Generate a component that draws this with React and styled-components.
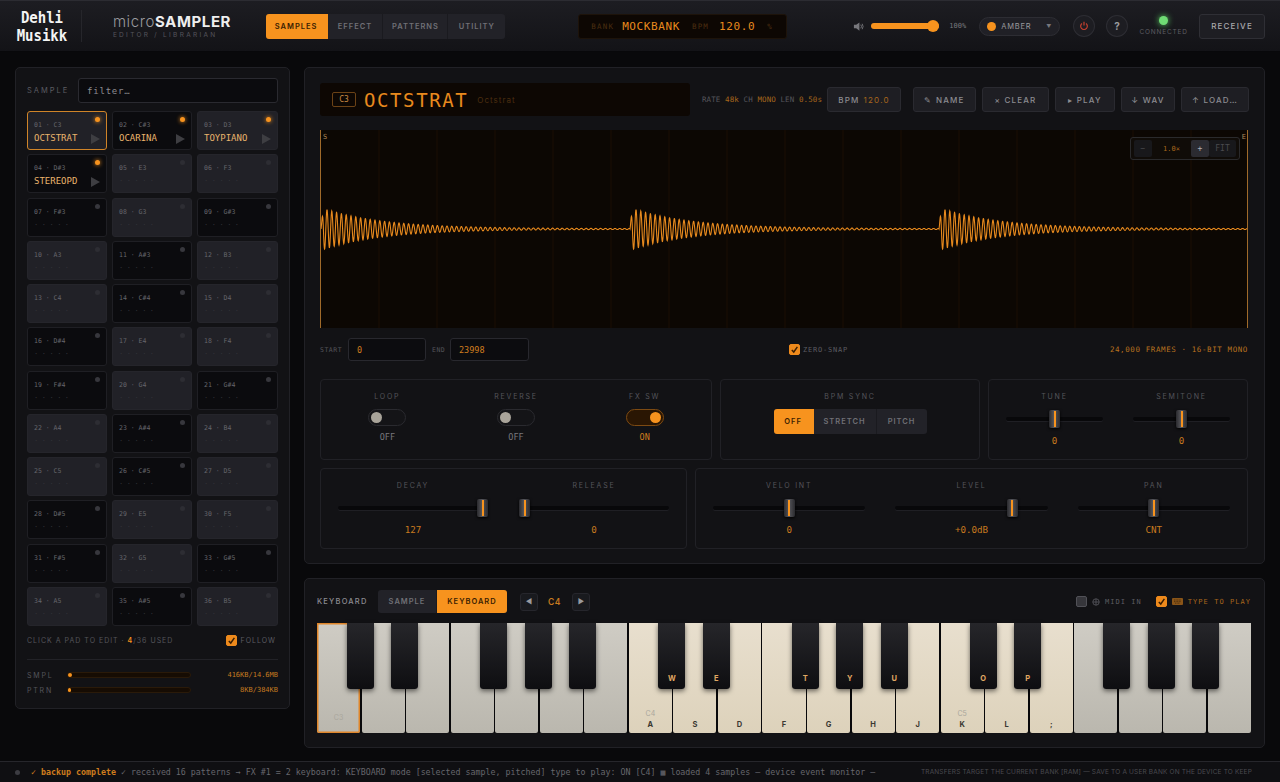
import React from "react";
import styled, { createGlobalStyle } from "styled-components";

const MONO = `"DejaVu Sans Mono", "Liberation Mono", monospace`;
const LABEL = `Inter, "Liberation Sans", sans-serif`;
const AMBER = "#f7931e";

const GlobalStyle = createGlobalStyle`
  html, body { margin: 0; padding: 0; background: #09090b; }
  body { width: 1280px; height: 782px; overflow: hidden; font-family: ${LABEL}; }
  * { box-sizing: border-box; }
`;

const Page = styled.div`
  width: 1280px;
  height: 782px;
  display: flex;
  flex-direction: column;
`;

/* ---- Top bar ---- */
const TopBar = styled.header`
  height: 52px;
  flex: none;
  display: flex;
  align-items: center;
  padding: 0 15px;
  background: linear-gradient(#1d1d22, #131317);
  border-top: 1px solid #2c2c32;
  border-bottom: 1px solid #08080a;
`;

const Logo = styled.div`
  width: 54px;
  color: #f4f4f4;
  font-family: ${MONO};
  font-weight: 700;
  font-size: 14px;
  line-height: 16px;
  letter-spacing: 0;
  text-align: center;
  transform: scaleY(1.12);
`;

const BarDivider = styled.div`
  width: 1px;
  height: 32px;
  margin: 0 31px 0 12px;
  background: #26262b;
`;

const Brand = styled.div`
  width: 153px;
`;

const BrandName = styled.div`
  font-size: 15px;
  line-height: 17px;
  letter-spacing: 0.6px;
  color: #9a9a9e;
  font-weight: 300;
  & b { color: #eeeeee; font-weight: 700; }
`;

const BrandSub = styled.div`
  font-size: 6.5px;
  line-height: 9px;
  letter-spacing: 2.3px;
  margin-top: 1px;
  color: #55555b;
`;

const Segmented = styled.div`
  display: flex;
  height: ${({ $h }) => $h}px;
  background: #222228;
  border-radius: 3px;
  overflow: hidden;
`;

const SegButton = styled.div`
  width: ${({ $w }) => $w}px;
  display: flex;
  align-items: center;
  justify-content: center;
  font-size: 7.5px;
  font-weight: 600;
  letter-spacing: 1px;
  color: ${({ $on }) => ($on ? "#3a1e02" : "#707076")};
  background: ${({ $on }) => ($on ? AMBER : "transparent")};
  border-right: 1px solid ${({ $on }) => ($on ? AMBER : "#1a1a1f")};
  &:last-child { border-right: none; }
`;

const BankDisplay = styled.div`
  width: 209px;
  height: 25px;
  margin-left: 73px;
  padding: 0 12px;
  display: flex;
  align-items: center;
  background: #0d0703;
  border: 1px solid #1d130a;
  border-radius: 3px;
  font-family: ${MONO};
`;

const LcdTag = styled.span`
  font-size: 7.5px;
  letter-spacing: 1.2px;
  color: #4b2e10;
  margin-right: ${({ $mr }) => $mr || 8}px;
`;

const LcdValue = styled.span`
  font-size: 11px;
  letter-spacing: 0.6px;
  color: #e88a1e;
  margin-right: 12px;
`;

const Volume = styled.div`
  margin-left: 66px;
  display: flex;
  align-items: center;
  color: #77777c;
`;

const VolumeTrack = styled.div`
  position: relative;
  width: 68px;
  height: 6px;
  margin-left: 7px;
  border-radius: 3px;
  background: ${AMBER};
  &::after {
    content: "";
    position: absolute;
    right: 0;
    top: -3px;
    width: 12px;
    height: 12px;
    border-radius: 50%;
    background: ${AMBER};
  }
`;

const VolumeText = styled.span`
  width: 40px;
  padding-left: 10px;
  font-family: ${MONO};
  font-size: 7px;
  color: #77777c;
`;

const ThemePicker = styled.div`
  width: 81px;
  height: 19px;
  padding: 0 7px;
  display: flex;
  align-items: center;
  border-radius: 10px;
  background: #202026;
  border: 1px solid #2d2d33;
  font-size: 7.5px;
  letter-spacing: 0.8px;
  color: #9a9a9e;
  & i {
    width: 9px;
    height: 9px;
    margin-right: 5px;
    border-radius: 50%;
    background: ${AMBER};
  }
  & em {
    margin-left: auto;
    font-style: normal;
    font-size: 5px;
    color: #77777c;
  }
`;

const RoundButton = styled.div`
  width: 22px;
  height: 22px;
  margin-left: ${({ $ml }) => $ml}px;
  display: flex;
  align-items: center;
  justify-content: center;
  border-radius: 50%;
  background: #1d1d22;
  border: 1px solid #2d2d33;
  color: ${({ $red }) => ($red ? "#c8402f" : "#9a9a9e")};
  font-size: 10px;
  font-weight: 700;
`;

const Connection = styled.div`
  width: 47px;
  margin-left: 12px;
  display: flex;
  flex-direction: column;
  align-items: center;
  font-size: 6.5px;
  letter-spacing: 0.8px;
  color: #5c5c62;
  & i {
    width: 9px;
    height: 9px;
    margin-bottom: 3px;
    border-radius: 50%;
    background: #6fdc74;
    box-shadow: 0 0 6px #5ed468;
  }
`;

const ReceiveButton = styled.div`
  width: 66px;
  height: 25px;
  margin-left: 12px;
  display: flex;
  align-items: center;
  justify-content: center;
  font-size: 8px;
  font-weight: 500;
  letter-spacing: 1.2px;
  color: #a8a8ac;
  background: #1e1e23;
  border: 1px solid #2f2f35;
  border-radius: 3px;
`;

/* ---- Main layout ---- */
const Main = styled.main`
  flex: 1;
  min-height: 0;
  display: grid;
  grid-template-columns: 275px 961px;
  gap: 14px;
  padding: 15px 15px 13px;
`;

const Panel = styled.section`
  background: #121215;
  border: 1px solid #212126;
  border-radius: 5px;
`;

const SideBar = styled(Panel)`
  height: 642px;
  padding: 10px 11px 0 11px;
`;

const RightColumn = styled.div`
  display: flex;
  flex-direction: column;
  gap: 14px;
`;

/* ---- Sample list ---- */
const FilterRow = styled.div`
  display: flex;
  align-items: center;
  height: 25px;
`;

const SmallLabel = styled.span`
  font-size: 7.5px;
  letter-spacing: 2px;
  color: #5c5c62;
`;

const FilterInput = styled.div`
  width: 200px;
  height: 25px;
  margin-left: auto;
  padding: 0 8px;
  display: flex;
  align-items: center;
  background: #0b0b0e;
  border: 1px solid #2a2a30;
  border-radius: 3px;
  font-family: ${MONO};
  font-size: 9px;
  letter-spacing: 0.8px;
  color: #8d8d92;
`;

const PadGrid = styled.div`
  margin-top: 8px;
  display: grid;
  grid-template-columns: 80px 80px 81px;
  grid-auto-rows: 39px;
  column-gap: 5px;
  row-gap: 4.27px;
`;

const PadCell = styled.div`
  position: relative;
  padding: 9px 6px 0 6px;
  border-radius: 3px;
  background: ${({ $dark }) => ($dark ? "#0b0b0e" : "#212127")};
  border: 1px solid ${({ $selected, $dark }) => ($selected ? "#d08428" : $dark ? "#1f1f24" : "#25252b")};
`;

const PadNum = styled.div`
  font-family: ${MONO};
  font-size: 6.5px;
  line-height: 9px;
  color: #65656b;
`;

const PadName = styled.div`
  margin-top: 3px;
  font-family: ${MONO};
  font-size: 9px;
  line-height: 11px;
  color: #e9b36c;
`;

const PadTicks = styled.div`
  margin-top: 4px;
  font-family: ${MONO};
  font-size: 7px;
  line-height: 9px;
  letter-spacing: 3.5px;
  color: #34343a;
`;

const PadDot = styled.i`
  position: absolute;
  top: 5px;
  right: 6px;
  width: 5px;
  height: 5px;
  border-radius: 50%;
  background: ${({ $on, $dark }) => ($on ? AMBER : $dark ? "#37373d" : "#2d2d33")};
  box-shadow: ${({ $on }) => ($on ? `0 0 4px ${AMBER}` : "none")};
`;

const PadPlay = styled.i`
  position: absolute;
  right: 6px;
  bottom: 5px;
  width: 0;
  height: 0;
  border-left: 9px solid #3e3e42;
  border-top: 5px solid transparent;
  border-bottom: 5px solid transparent;
`;

const SideInfo = styled.div`
  margin: 7px 0 8px;
  height: 27px;
  padding: 0 2px 10px 0;
  display: flex;
  align-items: center;
  justify-content: space-between;
  font-size: 7px;
  letter-spacing: 1px;
  color: #55555b;
  border-bottom: 1px solid #222227;
  & b { color: ${AMBER}; font-weight: 600; }
`;

const CheckRow = styled.label`
  display: flex;
  align-items: center;
  gap: ${({ $gap }) => $gap || 4}px;
  font-size: 7px;
  letter-spacing: 1px;
  color: ${({ $amber }) => ($amber ? "#a8661c" : "#5c5c62")};
`;

const CheckBox = styled.span`
  width: 11px;
  height: 11px;
  display: flex;
  align-items: center;
  justify-content: center;
  border-radius: 2px;
  background: ${({ $on }) => ($on ? "#ee8a1c" : "#36363b")};
  border: 1px solid ${({ $on }) => ($on ? "#ee8a1c" : "#515157")};
`;

const MeterRow = styled.div`
  height: 15px;
  display: flex;
  align-items: center;
`;

const MeterLabel = styled.span`
  width: 40px;
  font-size: 7px;
  letter-spacing: 1.8px;
  color: #55555b;
`;

const MeterTrack = styled.div`
  width: 124px;
  height: 6px;
  background: #160c03;
  border: 1px solid #2a1a09;
  border-radius: 3px;
`;

const MeterFill = styled.div`
  height: 100%;
  background: ${AMBER};
  border-radius: 2px;
`;

const MeterValue = styled.span`
  margin-left: auto;
  font-family: ${MONO};
  font-size: 7px;
  color: #c47a20;
`;

/* ---- Sample editor ---- */
const Editor = styled(Panel)`
  height: 497px;
  padding: 15px 16px 0 15px;
`;

const EditorHead = styled.div`
  height: 33px;
  display: flex;
  align-items: center;
  & > * { flex: none; }
`;

const NameDisplay = styled.div`
  width: 370px;
  height: 33px;
  padding: 0 12px;
  display: flex;
  align-items: center;
  background: #0d0703;
  border-radius: 3px;
`;

const NoteBadge = styled.span`
  width: 24px;
  height: 15px;
  display: flex;
  align-items: center;
  justify-content: center;
  border: 1px solid #6b4216;
  border-radius: 2px;
  font-family: ${MONO};
  font-size: 8px;
  color: #c88a44;
`;

const SampleTitle = styled.span`
  margin-left: 8px;
  font-family: ${MONO};
  font-size: 19px;
  letter-spacing: 1.6px;
  color: #e88a1e;
`;

const SampleSub = styled.span`
  margin-left: 9px;
  font-size: 8px;
  letter-spacing: 1px;
  color: #4b2e10;
`;

const Meta = styled.div`
  margin-left: 12px;
  width: 125px;
  font-family: ${MONO};
  font-size: 7.5px;
  letter-spacing: 0.1px;
  color: #55555b;
  white-space: nowrap;
  & b { color: #a8661c; font-weight: 400; }
`;

const ActionButton = styled.div`
  width: ${({ $w }) => $w}px;
  height: 25px;
  margin-left: ${({ $ml }) => $ml ?? 6}px;
  display: flex;
  align-items: center;
  justify-content: center;
  gap: 4px;
  font-size: 8px;
  font-weight: 500;
  letter-spacing: 1.2px;
  color: #8c8c91;
  background: #1e1e23;
  border: 1px solid #2a2a30;
  border-radius: 3px;
  & b { color: #a8661c; font-weight: 400; }
`;

const WaveBox = styled.div`
  position: relative;
  margin-top: 14px;
  height: 198px;
  background: #0c0703;
  border-left: 1px solid #a06a2a;
  border-right: 1px solid #a06a2a;
`;

const WaveSvg = styled.svg`
  display: block;
  width: 100%;
  height: 100%;
`;

const WaveMark = styled.span`
  position: absolute;
  top: 3px;
  ${({ $end }) => ($end ? "right: 1px;" : "left: 2px;")}
  font-family: ${MONO};
  font-size: 7px;
  color: #b08a5a;
`;

const ZoomBox = styled.div`
  position: absolute;
  top: 7px;
  right: 7px;
  width: 110px;
  height: 23px;
  padding: 0 3px;
  display: flex;
  align-items: center;
  background: #100c08;
  border: 1px solid #2a2a2c;
  border-radius: 3px;
  font-family: ${MONO};
`;

const ZoomButton = styled.span`
  width: ${({ $w }) => $w || 18}px;
  height: 17px;
  display: flex;
  align-items: center;
  justify-content: center;
  border-radius: 2px;
  background: ${({ $lit }) => ($lit ? "#2b2b31" : "#18181b")};
  color: ${({ $lit }) => ($lit ? "#b0b0b4" : "#4a4a4e")};
  font-size: 8px;
`;

const ZoomValue = styled.span`
  flex: 1;
  text-align: center;
  font-size: 7px;
  color: #a8661c;
`;

const RangeRow = styled.div`
  margin-top: 10px;
  height: 23px;
  display: flex;
  align-items: center;
`;

const RangeLabel = styled.span`
  width: ${({ $w }) => $w}px;
  font-family: ${MONO};
  font-size: 6.5px;
  letter-spacing: 0.5px;
  color: #55555b;
`;

const RangeInput = styled.div`
  width: ${({ $w }) => $w}px;
  height: 23px;
  margin-right: 6px;
  padding: 0 8px;
  display: flex;
  align-items: center;
  background: #0c0c0f;
  border: 1px solid #28282e;
  border-radius: 3px;
  font-family: ${MONO};
  font-size: 8.5px;
  color: #d07d1e;
`;

const ZeroSnap = styled(CheckRow)`
  margin-left: 254px;
  font-family: ${MONO};
  font-size: 7px;
  letter-spacing: 0.8px;
`;

const FramesText = styled.span`
  margin-left: auto;
  font-family: ${MONO};
  font-size: 7.5px;
  letter-spacing: 0.6px;
  color: #b9711f;
`;

const GroupRow = styled.div`
  margin-top: ${({ $mt }) => $mt}px;
  display: grid;
  grid-template-columns: ${({ $cols }) => $cols};
  gap: 8px;
`;

const Group = styled.div`
  height: 81px;
  padding: ${({ $px }) => `12px ${$px}px 0`};
  display: grid;
  grid-template-columns: repeat(${({ $n }) => $n}, 1fr);
  column-gap: ${({ $gap }) => $gap}px;
  border: 1px solid #212126;
  border-radius: 4px;
`;

const Cell = styled.div`
  display: flex;
  flex-direction: column;
  align-items: center;
`;

const CellLabel = styled.div`
  height: 9px;
  font-size: 7px;
  line-height: 9px;
  letter-spacing: 1.8px;
  color: #55555b;
`;

const Switch = styled.div`
  position: relative;
  width: 38px;
  height: 17px;
  margin-top: 8px;
  border-radius: 9px;
  background: ${({ $on }) => ($on ? "#2a1603" : "#141417")};
  border: 1px solid ${({ $on }) => ($on ? "#7d4a12" : "#2a2a2f")};
  &::after {
    content: "";
    position: absolute;
    top: 2px;
    ${({ $on }) => ($on ? "right: 2px;" : "left: 2px;")}
    width: 11px;
    height: 11px;
    border-radius: 50%;
    background: ${({ $on }) => ($on ? AMBER : "#a9a49a")};
  }
`;

const SwitchText = styled.div`
  margin-top: 6px;
  font-family: ${MONO};
  font-size: 8.5px;
  line-height: 11px;
  color: ${({ $on }) => ($on ? "#d07d1e" : "#77777c")};
`;

const SliderBox = styled.div`
  position: relative;
  width: 100%;
  height: 18px;
  margin-top: 9px;
  display: flex;
  align-items: center;
`;

const SliderTrack = styled.div`
  width: 100%;
  height: 4px;
  background: #08080a;
  border-radius: 2px;
  box-shadow: 0 1px 0 #1f1f24;
`;

const SliderThumb = styled.div`
  position: absolute;
  top: 0;
  width: 11px;
  height: 18px;
  border-radius: 2px;
  background: linear-gradient(90deg, #2a2a2e, #55555a 45%, #2a2a2e);
  box-shadow: 0 1px 3px #000;
  &::after {
    content: "";
    position: absolute;
    left: 4.5px;
    top: 1px;
    bottom: 1px;
    width: 2px;
    background: ${AMBER};
  }
`;

const SliderValue = styled.div`
  margin-top: 7px;
  font-family: ${MONO};
  font-size: 9.2px;
  line-height: 12px;
  color: #c87a1f;
`;

const SyncBody = styled.div`
  margin-top: 8px;
`;

/* ---- Keyboard ---- */
const KeyboardPanel = styled(Panel)`
  height: 170px;
  padding: 11px 13px 0 12px;
`;

const KeyboardHead = styled.div`
  height: 23px;
  display: flex;
  align-items: center;
`;

const KeyboardTitle = styled.span`
  width: 61px;
  font-size: 7.5px;
  font-weight: 500;
  letter-spacing: 1.2px;
  color: #8c8c91;
`;

const ArrowButton = styled.div`
  width: 18px;
  height: 18px;
  margin-left: ${({ $ml }) => $ml}px;
  display: flex;
  align-items: center;
  justify-content: center;
  font-size: 7px;
  color: #9a9a9e;
  background: #191a1e;
  border: 1px solid #26262c;
  border-radius: 3px;
`;

const OctaveText = styled.span`
  margin-left: 10px;
  font-size: 8.5px;
  font-weight: 600;
  letter-spacing: 0.5px;
  color: #c87a1f;
`;

const HeadRight = styled.div`
  margin-left: auto;
  display: flex;
  align-items: center;
  gap: 14px;
  font-family: ${MONO};
  & > label { font-family: ${MONO}; letter-spacing: 1.05px; }
`;

const Keys = styled.div`
  position: relative;
  margin-top: 10px;
  height: 110px;
  display: flex;
  background: #08080a;
`;

const WhiteKey = styled.div`
  position: relative;
  flex: 1;
  margin-right: 1.5px;
  display: flex;
  flex-direction: column;
  align-items: center;
  justify-content: flex-end;
  padding-bottom: 3px;
  border-radius: 0 0 2px 2px;
  background: ${({ $warm }) =>
    $warm ? "linear-gradient(#e8dfce, #ddd2bb)" : "linear-gradient(#cfccc4, #bab7ae)"};
  box-shadow: ${({ $sel }) => ($sel ? "inset 0 0 0 1.5px #e0862a" : "none")};
  &:nth-child(21) { margin-right: 0; }
`;

const OctaveMark = styled.span`
  font-size: 7px;
  line-height: 10px;
  color: #a9a69c;
`;

const KeyChar = styled.span`
  min-height: 7px;
  font-size: 7.5px;
  font-weight: 700;
  line-height: 11px;
  color: #3a3832;
`;

const BlackKey = styled.div`
  position: absolute;
  top: 0;
  width: 27px;
  height: 66px;
  display: flex;
  align-items: flex-end;
  justify-content: center;
  padding-bottom: 6px;
  border-radius: 0 0 3px 3px;
  background: linear-gradient(#26262a, #0e0e11);
  box-shadow: 0 2px 5px rgba(0, 0, 0, 0.55);
  font-size: 7.5px;
  font-weight: 700;
  color: #e0a864;
`;

/* ---- Status bar ---- */
const StatusBar = styled.footer`
  height: 21px;
  flex: none;
  display: flex;
  align-items: center;
  padding: 0 28px 0 15px;
  background: #0f0f12;
  border-top: 1px solid #26262b;
`;

const StatusDot = styled.i`
  width: 5px;
  height: 5px;
  margin-right: 11px;
  border-radius: 50%;
  background: #3c3c42;
`;

const StatusLog = styled.div`
  font-family: ${MONO};
  font-size: 8.3px;
  white-space: nowrap;
  color: #66666c;
  & b { color: #d07d1e; font-weight: 700; }
`;

const StatusNote = styled.div`
  margin-left: auto;
  font-size: 6.5px;
  letter-spacing: 0.17px;
  white-space: nowrap;
  color: #4a4a50;
`;

/* ---- Data ---- */
const NOTES = ["C", "C#", "D", "D#", "E", "F", "F#", "G", "G#", "A", "A#", "B"];
const LOADED = { 0: "OCTSTRAT", 1: "OCARINA", 2: "TOYPIANO", 3: "STEREOPD" };

const pads = Array.from({ length: 36 }, (_, i) => {
  const note = NOTES[i % 12];
  const octave = 3 + Math.floor(i / 12);
  return {
    num: String(i + 1).padStart(2, "0"),
    note: `${note}${octave}`,
    dark: note.includes("#"),
    name: LOADED[i],
  };
});

const WHITE_NAMES = ["C", "D", "E", "F", "G", "A", "B"];
const TYPE_KEYS = { 7: "A", 8: "S", 9: "D", 10: "F", 11: "G", 12: "H", 13: "J", 14: "K", 15: "L", 16: ";" };
const BLACK_AFTER = [0, 1, 3, 4, 5];
const BLACK_KEYS = { 7: "W", 8: "E", 10: "T", 11: "Y", 12: "U", 14: "O", 15: "P" };
const KEY_W = 934 / 21;

const whites = Array.from({ length: 21 }, (_, i) => {
  const octave = 3 + Math.floor(i / 7);
  const isC = WHITE_NAMES[i % 7] === "C";
  return { i, mark: isC && i < 15 ? `C${octave}` : null, key: TYPE_KEYS[i], warm: i >= 7 && i <= 16 };
});

const blacks = [];
for (let i = 0; i < 20; i++) {
  if (BLACK_AFTER.includes(i % 7)) blacks.push({ i, key: BLACK_KEYS[i] });
}

// three decaying bursts, same shape each
function buildWave() {
  const pts = [];
  for (let x = 0; x <= 926; x += 0.25) {
    const t = x % 309;
    const amp = 21 * Math.exp(-t / 60) * Math.min(1, t / 3 + 0.15) + 0.4;
    const y = 99 - amp * Math.sin((t / 4.8) * Math.PI * 2);
    pts.push(`${x.toFixed(2)},${y.toFixed(2)}`);
  }
  return pts.join(" ");
}

const wavePoints = buildWave();
const gridLines = Array.from({ length: 15 }, (_, i) => (i + 1) * 58);

const Tick = () => (
  <svg width="9" height="9" viewBox="0 0 10 10" fill="none" stroke="#3a1e02" strokeWidth="1.6">
    <path d="M2 5.5 L4.2 7.8 L8.2 2" />
  </svg>
);

const Pad = ({ pad, selected }) => (
  <PadCell $dark={pad.dark} $selected={selected}>
    <PadNum>
      {pad.num} · {pad.note}
    </PadNum>
    {pad.name ? <PadName>{pad.name}</PadName> : <PadTicks>·····</PadTicks>}
    <PadDot $on={!!pad.name} $dark={pad.dark} />
    {pad.name && <PadPlay />}
  </PadCell>
);

const Slider = ({ label, value, pos }) => (
  <Cell>
    <CellLabel>{label}</CellLabel>
    <SliderBox>
      <SliderTrack />
      <SliderThumb style={{ left: `calc((100% - 11px) * ${pos})` }} />
    </SliderBox>
    <SliderValue>{value}</SliderValue>
  </Cell>
);

const Toggle = ({ label, on }) => (
  <Cell>
    <CellLabel>{label}</CellLabel>
    <Switch $on={on} />
    <SwitchText $on={on}>{on ? "ON" : "OFF"}</SwitchText>
  </Cell>
);

const App = () => (
  <Page>
    <GlobalStyle />
    <TopBar>
      <Logo>
        Dehli
        <br />
        Musikk
      </Logo>
      <BarDivider />
      <Brand>
        <BrandName>
          micro<b>SAMPLER</b>
        </BrandName>
        <BrandSub>EDITOR / LIBRARIAN</BrandSub>
      </Brand>
      <Segmented $h={25}>
        <SegButton $w={62} $on>SAMPLES</SegButton>
        <SegButton $w={56}>EFFECT</SegButton>
        <SegButton $w={65}>PATTERNS</SegButton>
        <SegButton $w={57}>UTILITY</SegButton>
      </Segmented>
      <BankDisplay>
        <LcdTag>BANK</LcdTag>
        <LcdValue>MOCKBANK</LcdValue>
        <LcdTag $mr={10}>BPM</LcdTag>
        <LcdValue>120.0</LcdValue>
        <LcdTag>%</LcdTag>
      </BankDisplay>
      <Volume>
        <svg width="11" height="11" viewBox="0 0 12 12" fill="currentColor">
          <path d="M1 4 H3.5 L7 1.5 V10.5 L3.5 8 H1 Z" />
          <path d="M8.5 4 Q10 6 8.5 8 M10 3 Q12 6 10 9" fill="none" stroke="currentColor" />
        </svg>
        <VolumeTrack />
        <VolumeText>100%</VolumeText>
      </Volume>
      <ThemePicker>
        <i />
        AMBER
        <em>▼</em>
      </ThemePicker>
      <RoundButton $ml={13} $red>
        <svg width="10" height="10" viewBox="0 0 12 12" fill="none" stroke="currentColor" strokeWidth="1.4">
          <path d="M3.6 3 A4 4 0 1 0 8.4 3 M6 1 V5.5" />
        </svg>
      </RoundButton>
      <RoundButton $ml={11}>?</RoundButton>
      <Connection>
        <i />
        CONNECTED
      </Connection>
      <ReceiveButton>RECEIVE</ReceiveButton>
    </TopBar>

    <Main>
      <SideBar>
        <FilterRow>
          <SmallLabel>SAMPLE</SmallLabel>
          <FilterInput>filter…</FilterInput>
        </FilterRow>
        <PadGrid>
          {pads.map((pad, i) => (
            <Pad key={pad.num} pad={pad} selected={i === 0} />
          ))}
        </PadGrid>
        <SideInfo>
          <span>
            CLICK A PAD TO EDIT · <b>4</b>/36 USED
          </span>
          <CheckRow>
            <CheckBox $on>
              <Tick />
            </CheckBox>
            FOLLOW
          </CheckRow>
        </SideInfo>
        <MeterRow>
          <MeterLabel>SMPL</MeterLabel>
          <MeterTrack>
            <MeterFill style={{ width: "3%" }} />
          </MeterTrack>
          <MeterValue>416KB/14.6MB</MeterValue>
        </MeterRow>
        <MeterRow>
          <MeterLabel>PTRN</MeterLabel>
          <MeterTrack>
            <MeterFill style={{ width: "2.5%" }} />
          </MeterTrack>
          <MeterValue>8KB/384KB</MeterValue>
        </MeterRow>
      </SideBar>

      <RightColumn>
        <Editor>
          <EditorHead>
            <NameDisplay>
              <NoteBadge>C3</NoteBadge>
              <SampleTitle>OCTSTRAT</SampleTitle>
              <SampleSub>Octstrat</SampleSub>
            </NameDisplay>
            <Meta>
              RATE <b>48k</b> CH <b>MONO</b> LEN <b>0.50s</b>
            </Meta>
            <ActionButton $w={74} $ml={0}>
              BPM <b>120.0</b>
            </ActionButton>
            <ActionButton $w={63} $ml={12}>✎ NAME</ActionButton>
            <ActionButton $w={67}>× CLEAR</ActionButton>
            <ActionButton $w={60}>▸ PLAY</ActionButton>
            <ActionButton $w={54}>↓ WAV</ActionButton>
            <ActionButton $w={68}>↑ LOAD…</ActionButton>
          </EditorHead>

          <WaveBox>
            <WaveSvg viewBox="0 0 926 198" preserveAspectRatio="none">
              {gridLines.map((x) => (
                <line key={x} x1={x} x2={x} y1="0" y2="198" stroke="#1a0f05" strokeWidth="1" />
              ))}
              <polyline points={wavePoints} fill="none" stroke="#e88a1e" strokeWidth="1.1" />
            </WaveSvg>
            <WaveMark>S</WaveMark>
            <WaveMark $end>E</WaveMark>
            <ZoomBox>
              <ZoomButton>−</ZoomButton>
              <ZoomValue>1.0×</ZoomValue>
              <ZoomButton $lit>+</ZoomButton>
              <ZoomButton $w={27}>FIT</ZoomButton>
            </ZoomBox>
          </WaveBox>

          <RangeRow>
            <RangeLabel $w={28}>START</RangeLabel>
            <RangeInput $w={78}>0</RangeInput>
            <RangeLabel $w={18}>END</RangeLabel>
            <RangeInput $w={79}>23998</RangeInput>
            <ZeroSnap $gap={3}>
              <CheckBox $on>
                <Tick />
              </CheckBox>
              ZERO-SNAP
            </ZeroSnap>
            <FramesText>24,000 FRAMES · 16-BIT MONO</FramesText>
          </RangeRow>

          <GroupRow $mt={18} $cols="392px 260px 260px">
            <Group $n={3} $px={2} $gap={0}>
              <Toggle label="LOOP" />
              <Toggle label="REVERSE" />
              <Toggle label="FX SW" on />
            </Group>
            <Group $n={1} $px={0} $gap={0}>
              <Cell>
                <CellLabel>BPM SYNC</CellLabel>
                <SyncBody>
                  <Segmented $h={25}>
                    <SegButton $w={40} $on>OFF</SegButton>
                    <SegButton $w={63}>STRETCH</SegButton>
                    <SegButton $w={50}>PITCH</SegButton>
                  </Segmented>
                </SyncBody>
              </Cell>
            </Group>
            <Group $n={2} $px={17} $gap={30}>
              <Slider label="TUNE" value="0" pos={0.5} />
              <Slider label="SEMITONE" value="0" pos={0.5} />
            </Group>
          </GroupRow>

          <GroupRow $mt={8} $cols="367px 553px">
            <Group $n={2} $px={17} $gap={31}>
              <Slider label="DECAY" value="127" pos={1} />
              <Slider label="RELEASE" value="0" pos={0} />
            </Group>
            <Group $n={3} $px={17} $gap={30}>
              <Slider label="VELO INT" value="0" pos={0.5} />
              <Slider label="LEVEL" value="+0.0dB" pos={0.79} />
              <Slider label="PAN" value="CNT" pos={0.5} />
            </Group>
          </GroupRow>
        </Editor>

        <KeyboardPanel>
          <KeyboardHead>
            <KeyboardTitle>KEYBOARD</KeyboardTitle>
            <Segmented $h={23}>
              <SegButton $w={59}>SAMPLE</SegButton>
              <SegButton $w={70} $on>KEYBOARD</SegButton>
            </Segmented>
            <ArrowButton $ml={13}>◀</ArrowButton>
            <OctaveText>C4</OctaveText>
            <ArrowButton $ml={11}>▶</ArrowButton>
            <HeadRight>
              <CheckRow $gap={5}>
                <CheckBox />
                <svg width="8" height="8" viewBox="0 0 10 10" fill="none" stroke="#5c5c62">
                  <circle cx="5" cy="5" r="4" />
                  <path d="M1 5 H9 M5 1 V9" />
                </svg>
                MIDI IN
              </CheckRow>
              <CheckRow $gap={5} $amber>
                <CheckBox $on>
                  <Tick />
                </CheckBox>
                <svg width="11" height="7" viewBox="0 0 11 7">
                  <rect width="11" height="7" rx="1" fill="#8a5518" />
                  <path d="M2 2 H9 M2 3.6 H9 M3 5.2 H8" stroke="#3a2208" strokeWidth="0.7" strokeDasharray="1 0.6" />
                </svg>
                TYPE TO PLAY
              </CheckRow>
            </HeadRight>
          </KeyboardHead>
          <Keys>
            {whites.map((k) => (
              <WhiteKey key={k.i} $warm={k.warm} $sel={k.i === 0}>
                {k.mark && <OctaveMark>{k.mark}</OctaveMark>}
                <KeyChar>{k.key}</KeyChar>
              </WhiteKey>
            ))}
            {blacks.map((k) => (
              <BlackKey key={k.i} style={{ left: (k.i + 1) * KEY_W - 14.5 }}>
                {k.key}
              </BlackKey>
            ))}
          </Keys>
        </KeyboardPanel>
      </RightColumn>
    </Main>

    <StatusBar>
      <StatusDot />
      <StatusLog>
        <b>✓ backup complete</b> ✓ received 16 patterns → FX #1 = 2 keyboard: KEYBOARD mode [selected sample, pitched] type to play: ON [C4] ▦ loaded 4 samples — device event monitor —
      </StatusLog>
      <StatusNote>TRANSFERS TARGET THE CURRENT BANK [RAM] — SAVE TO A USER BANK ON THE DEVICE TO KEEP</StatusNote>
    </StatusBar>
  </Page>
);

export default App;
